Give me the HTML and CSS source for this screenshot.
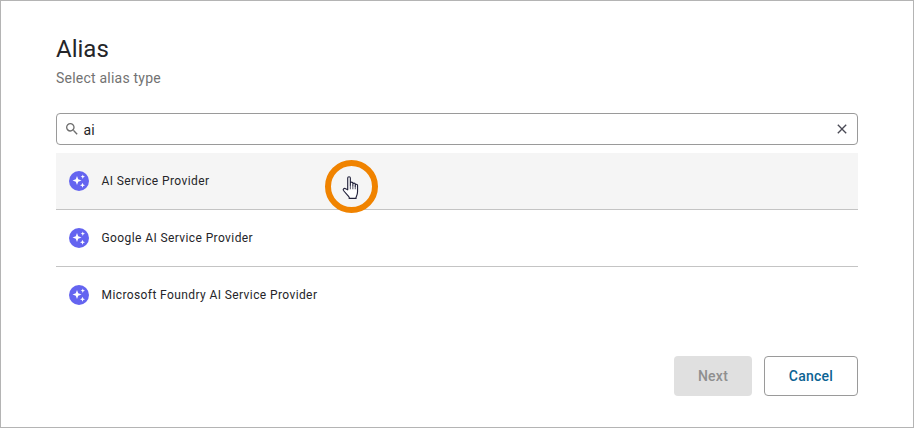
FILE: index.html
```html
<!DOCTYPE html>
<html lang="en">
<head>
<meta charset="utf-8">
<title>Alias</title>
<link rel="stylesheet" href="styles.css">
</head>
<body>
<div class="dialog">
  <h1 class="title">Alias</h1>
  <p class="subtitle">Select alias type</p>
  <div class="search">
    <svg class="search-icon" viewBox="0 0 24 24"><path d="M15.5 14h-.79l-.28-.27A6.47 6.47 0 0 0 16 9.5 6.5 6.5 0 1 0 9.5 16c1.61 0 3.09-.59 4.23-1.57l.27.28v.79l5 4.99L20.49 19l-4.99-5zm-6 0C7.01 14 5 11.99 5 9.5S7.01 5 9.5 5 14 7.01 14 9.5 11.99 14 9.5 14z"/></svg>
    <span class="search-text">ai</span>
    <svg class="clear-icon" viewBox="0 0 24 24"><path d="M19 6.41 17.59 5 12 10.59 6.41 5 5 6.41 10.59 12 5 17.59 6.41 19 12 13.41 17.59 19 19 17.59 13.41 12z"/></svg>
  </div>
  <ul class="list">
    <li class="row row-hover">
      <svg class="ai-icon" viewBox="0 0 20 20"><circle cx="10" cy="10" r="10" fill="#6464f0"/><path fill="#fff" d="M8 5l1.2 3.3L12.5 9.500 9.200 10.700 8 14 6.800 10.700 3.500 9.500 6.800 8.300zM13.800 3.500l.6 1.600 1.600.6-1.600.6-.6 1.600-.6-1.600-1.600-.6 1.600-.6zM13.500 11.800l.7 1.800 1.800.7-1.800.7-.7 1.800-.7-1.800-1.800-.7 1.800-.7z"/></svg>
      <span class="row-label">AI Service Provider</span>
    </li>
    <li class="row">
      <svg class="ai-icon" viewBox="0 0 20 20"><circle cx="10" cy="10" r="10" fill="#6464f0"/><path fill="#fff" d="M8 5l1.2 3.3L12.5 9.500 9.200 10.700 8 14 6.800 10.700 3.500 9.500 6.800 8.300zM13.800 3.500l.6 1.600 1.600.6-1.600.6-.6 1.600-.6-1.600-1.600-.6 1.600-.6zM13.500 11.800l.7 1.800 1.800.7-1.800.7-.7 1.800-.7-1.800-1.800-.7 1.800-.7z"/></svg>
      <span class="row-label">Google AI Service Provider</span>
    </li>
    <li class="row row-last">
      <svg class="ai-icon" viewBox="0 0 20 20"><circle cx="10" cy="10" r="10" fill="#6464f0"/><path fill="#fff" d="M8 5l1.2 3.3L12.5 9.500 9.200 10.700 8 14 6.800 10.700 3.500 9.500 6.800 8.300zM13.800 3.500l.6 1.600 1.600.6-1.600.6-.6 1.600-.6-1.600-1.600-.6 1.600-.6zM13.500 11.800l.7 1.800 1.800.7-1.800.7-.7 1.800-.7-1.800-1.800-.7 1.800-.7z"/></svg>
      <span class="row-label">Microsoft Foundry AI Service Provider</span>
    </li>
  </ul>
  <div class="actions">
    <button class="btn btn-next" type="button" disabled>Next</button>
    <button class="btn btn-cancel" type="button">Cancel</button>
  </div>
  <div class="cursor-ring">
    <svg class="hand" viewBox="0.6 1.4 15.200 21"><path fill="#fff" stroke="#23233c" stroke-width="1" stroke-linejoin="round" d="M6.200 13.500V3.200c0-1.500 2.300-1.500 2.300 0v6.300-1.900c0-1.200 2.200-1.200 2.200 0v2.200-1.300c0-1.200 2.100-1.200 2.100 0v1.800-.9c0-1.100 2-1.100 2 .1v5.700c0 2.400-.7 3.400-1.300 4.800v1h-6v-1c-1-1.500-3.800-4.200-5-5.900-.8-1.200.7-2.500 1.900-1.500z"/><path fill="none" stroke="#23233c" stroke-width=".7" d="M8.500 9.500v3.500M10.700 10v3M12.800 10v3"/></svg>
  </div>
</div>
</body>
</html>
```
FILE: styles.css
```css
* { box-sizing: border-box; }
html, body { margin: 0; padding: 0; background: #fff; }
body { font-family: Roboto, "Liberation Sans", sans-serif; }
.dialog {
  position: relative;
  width: 914px;
  height: 428px;
  border: 1px solid #b4b4b4;
  padding: 34px 55px 0 55px;
  display: flex;
  flex-direction: column;
  overflow: hidden;
}
.title { margin: 0; font-size: 24px; line-height: 28px; font-weight: 400; color: #252529; }
.subtitle { margin: 5px 0 0; font-size: 14px; line-height: 20px; letter-spacing: .22px; color: #727272; }
.search {
  margin-top: 25px;
  height: 32px;
  border: 1px solid #9a9a9a;
  border-radius: 4px;
  display: flex;
  align-items: center;
  padding: 0 8px 0 7px;
}
.search-icon { width: 16px; height: 16px; fill: #6e6e6e; flex: none; }
.search-text { margin-left: 3.500px; padding-top: 2px; font-size: 14px; letter-spacing: .25px; color: #252529; flex: 1; }
.clear-icon { width: 16px; height: 16px; fill: #4a4a55; flex: none; margin-right: -1px; }
.list { margin: 8px 0 0; padding: 0; list-style: none; }
.row {
  height: 57px;
  border-bottom: 1px solid #c4c4c4;
  display: flex;
  align-items: center;
  padding: 0 0 1px 13px;
}
.row-hover { background: #f5f5f5; }
.row-last { border-bottom-color: transparent; }
.ai-icon { width: 20px; height: 20px; flex: none; }
.row-label { margin-left: 12.5px; font-size: 12px; letter-spacing: .4px; color: #252529; }
.actions { position: absolute; right: 55px; top: 355px; display: flex; gap: 12px; }
.btn { height: 40px; border-radius: 4px; font-family: inherit; font-size: 14px; font-weight: 500; letter-spacing: .25px; padding: 0; }
.btn-next { width: 78px; background: #e0e0e0; border: 0; color: #8f8f8f; }
.btn-cancel { width: 94px; background: #fff; border: 1px solid #9a9a9a; color: #0b6393; }
.cursor-ring {
  position: absolute;
  left: 323.500px;
  top: 159px;
  width: 53px;
  height: 53px;
  border: 6px solid #f08300;
  border-radius: 50%;
  display: flex;
  align-items: center;
  justify-content: center;
}
.hand { width: 18px; height: 24px; flex: none; margin: 3px 3px 0 0; }
```
